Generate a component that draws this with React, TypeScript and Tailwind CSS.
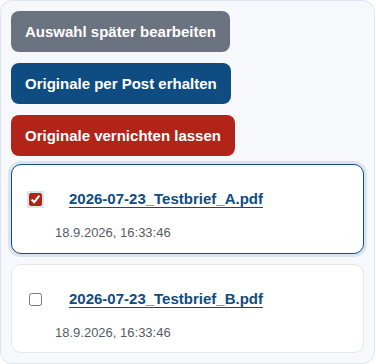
import React, { useState } from "react";

const files = [
  { name: "2026-07-23_Testbrief_A.pdf", date: "18.9.2026, 16:33:46" },
  { name: "2026-07-23_Testbrief_B.pdf", date: "18.9.2026, 16:33:46" },
];

export default function App() {
  const [sel, setSel] = useState<boolean[]>([true, false]);
  return (
    <div className="w-[375px] h-[364px] overflow-hidden" style={{ fontFamily: '"Liberation Sans", Arial, sans-serif' }}>
      <div className="rounded-xl border border-[#dfe5ee] bg-[#f6f8fc] px-[10px] pt-[10px] pb-[10px] flex flex-col">
        <div className="flex flex-col items-start gap-[11px]">
          <button className="h-[41px] px-[14px] rounded-lg bg-[#6b7280] text-white text-[15px] font-bold leading-[17px]">
            Auswahl später bearbeiten
          </button>
          <button className="h-[41px] px-[14px] rounded-lg bg-[#0f4c81] text-white text-[15px] font-bold leading-[17px]">
            Originale per Post erhalten
          </button>
          <button className="h-[41px] px-[14px] rounded-lg bg-[#b22318] text-white text-[15px] font-bold leading-[17px]">
            Originale vernichten lassen
          </button>
        </div>
        <div className="mt-[8px] flex flex-col gap-[10px]">
          {files.map((f, i) => (
            <div
              key={f.name}
              className={
                sel[i]
                  ? "rounded-[10px] bg-white border border-[#0f4c81] shadow-[0_0_0_3px_#dbe4ef] pt-[23px] pb-[11px] px-0"
                  : "rounded-[10px] bg-white border border-[#e5e7eb] pt-[23px] pb-[10px] px-0"
              }
            >
              <div className="flex items-center h-[22px]">
                <input
                  type="checkbox"
                  checked={sel[i]}
                  onChange={() => setSel(sel.map((v, j) => (j === i ? !v : v)))}
                  className={
                    sel[i]
                      ? "m-0 ml-[17px] w-[13px] h-[13px] accent-[#b22318] shadow-[0_0_0_2px_#dbe4ef]"
                      : "m-0 ml-[17px] w-[13px] h-[13px] accent-[#b22318]"
                  }
                />
                <a href="#" className="ml-[27px] text-[15px] font-bold text-[#0f4c81] underline underline-offset-[3px] leading-[22px]">
                  {f.name}
                </a>
              </div>
              <div className="mt-[14px] ml-[43px] text-[13px] leading-[18px] text-[#555b63]">{f.date}</div>
            </div>
          ))}
        </div>
      </div>
    </div>
  );
}
